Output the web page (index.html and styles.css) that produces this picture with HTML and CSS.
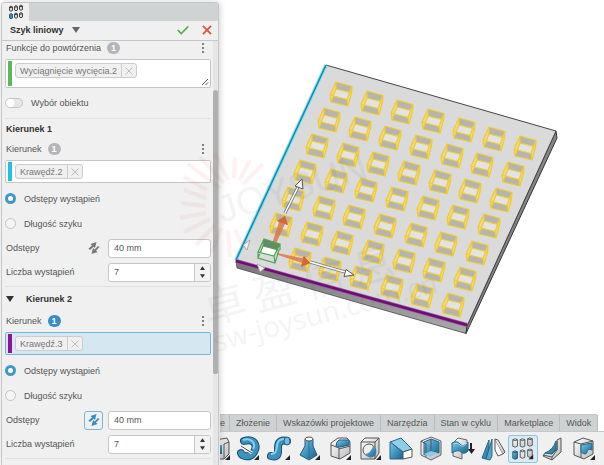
FILE: index.html
```html
<!DOCTYPE html>
<html lang="pl">
<head>
<meta charset="utf-8">
<title>Szyk liniowy</title>
<link rel="stylesheet" href="styles.css">
</head>
<body>
<svg width="0" height="0" class="defs" aria-hidden="true">
  <defs>
    <linearGradient id="blue" x1="0" y1="0" x2="1" y2="1"><stop offset="0" stop-color="#8cc9e6"/><stop offset=".5" stop-color="#4295bd"/><stop offset="1" stop-color="#1d6188"/></linearGradient>
    <linearGradient id="grey" x1="0" y1="0" x2="1" y2="1"><stop offset="0" stop-color="#fff"/><stop offset="1" stop-color="#b9bcbd"/></linearGradient>
    <linearGradient id="side" x1="0" y1="0" x2="0" y2="1"><stop offset="0" stop-color="#777"/><stop offset="1" stop-color="#aaa"/></linearGradient>
    <symbol id="swap" viewBox="0 0 14 14"><path d="M1.500 7.500 5 4.500 3.500 3 9.500 1 8 7 6.500 5.800 3 9zM12.500 6 9 9.500 10.500 11 4.500 13 6 7 7.500 8.500 11 5z" fill="currentColor"/></symbol>
    <symbol id="cross" viewBox="0 0 10 10"><path d="M1.500 1.500 8.500 8.500M8.500 1.500 1.500 8.500" stroke="currentColor" fill="none"/></symbol>
    <symbol id="down" viewBox="0 0 8 6"><path d="M0 0H8L4 6z" fill="currentColor"/></symbol>
    <symbol id="dots" viewBox="0 0 4 12"><g fill="#666"><circle cx="2" cy="2" r="1.100"/><circle cx="2" cy="6" r="1.100"/><circle cx="2" cy="10" r="1.100"/></g></symbol>
    <symbol id="corner" viewBox="0 0 28 28"><path d="M25 20V25H20z" fill="#222"/></symbol>
  </defs>
</svg>

<div class="app">
  <form class="panel">
    <div class="strip">
      <button type="button" class="strip-tab" aria-label="Szyk liniowy">
        <svg viewBox="0 0 16 16"><g fill="#d8d8d8" stroke="#444"><path d="M1.500 3V6.500Q3 8 4.500 6.500V3Q3 1 1.500 3Q3 4.500 4.500 3"/><path d="M6.500 2.500V6Q8 7.500 9.500 6V2.500Q8 .5 6.500 2.500Q8 4 9.500 2.500"/><path d="M11.500 2V5.500Q13 7 14.500 5.500V2Q13 0 11.500 2Q13 3.500 14.500 2"/><path d="M1.500 10.500V14Q3 15.500 4.500 14V10.500Q3 8.500 1.500 10.500" fill="#3790b8" stroke="#1f6286"/><path d="M6.500 10V13.500Q8 15 9.500 13.500V10Q8 8 6.500 10Q8 11.500 9.500 10"/><path d="M11.500 9.500V13Q13 14.500 14.500 13V9.500Q13 7.500 11.500 9.500Q13 11 14.500 9.500"/></g></svg>
      </button>
    </div>
    <header class="head">
      <button type="button" class="title">Szyk liniowy <svg class="tri"><use href="#down"/></svg></button>
      <button type="button" class="act" aria-label="OK"><svg viewBox="0 0 12 12"><path d="M1.500 6 4.500 9 10.500 3" fill="none" stroke="#56ae48" stroke-width="1.500"/></svg></button>
      <button type="button" class="act" aria-label="Anuluj"><svg viewBox="0 0 12 12"><path d="M2.500 2.500 9.500 9.500M9.500 2.500 2.500 9.500" fill="none" stroke="#e0503c" stroke-width="1.500"/></svg></button>
    </header>
    <div class="scroll">
      <div class="content">
        <section class="group">
          <div class="label first"><span>Funkcje do powtórzenia</span><b class="badge">1</b><button type="button" class="more" aria-label="Więcej"><svg><use href="#dots"/></svg></button></div>
          <div class="pick tall">
            <i class="bar green"></i>
            <span class="chip"><span>Wyciągnięcie wycięcia.2</span><button type="button" aria-label="Usuń"><svg><use href="#cross"/></svg></button></span>
            <svg class="grip" viewBox="0 0 8 8"><path d="M1 7 7 1M4.500 7 7 4.500" stroke="#555" fill="none"/></svg>
          </div>
          <label class="toggle"><input type="checkbox"><span>Wybór obiektu</span></label>
        </section>

        <section class="group">
          <h2>Kierunek 1</h2>
          <div class="label"><span>Kierunek</span><b class="badge">1</b><button type="button" class="more" aria-label="Więcej"><svg><use href="#dots"/></svg></button></div>
          <div class="pick"><i class="bar cyan"></i><span class="chip"><span>Krawędź.2</span><button type="button" aria-label="Usuń"><svg><use href="#cross"/></svg></button></span></div>
          <div class="fields">
            <label class="radio"><input type="radio" name="mode1" checked><span>Odstępy wystąpień</span></label>
            <label class="radio"><input type="radio" name="mode1"><span>Długość szyku</span></label>
            <div class="field"><label for="gap1">Odstępy</label><button type="button" class="swap" aria-label="Odwróć"><svg><use href="#swap"/></svg></button><input id="gap1" type="text" value="40 mm"></div>
            <div class="field"><label for="num1">Liczba wystąpień</label><span class="spin"><input id="num1" type="text" value="7"><span class="steps"><button type="button" class="up" aria-label="Więcej"><svg><use href="#down"/></svg></button><button type="button" aria-label="Mniej"><svg><use href="#down"/></svg></button></span></span></div>
          </div>
        </section>

        <section class="group">
          <h2 class="fold"><button type="button"><svg class="tri"><use href="#down"/></svg>Kierunek 2</button></h2>
          <div class="label"><span>Kierunek</span><b class="badge on">1</b><button type="button" class="more" aria-label="Więcej"><svg><use href="#dots"/></svg></button></div>
          <div class="pick active"><i class="bar purple"></i><span class="chip"><span>Krawędź.3</span><button type="button" aria-label="Usuń"><svg><use href="#cross"/></svg></button></span></div>
          <div class="fields">
            <label class="radio"><input type="radio" name="mode2" checked><span>Odstępy wystąpień</span></label>
            <label class="radio"><input type="radio" name="mode2"><span>Długość szyku</span></label>
            <div class="field"><label for="gap2">Odstępy</label><button type="button" class="swap on" aria-label="Odwróć"><svg><use href="#swap"/></svg></button><input id="gap2" type="text" value="40 mm"></div>
            <div class="field"><label for="num2">Liczba wystąpień</label><span class="spin"><input id="num2" type="text" value="7"><span class="steps"><button type="button" class="up" aria-label="Więcej"><svg><use href="#down"/></svg></button><button type="button" aria-label="Mniej"><svg><use href="#down"/></svg></button></span></span></div>
          </div>
        </section>
      </div>
      <div class="track"><div class="thumb"></div></div>
    </div>
  </form>

  <main class="work">
    <svg class="scene" viewBox="220 0 384 414" preserveAspectRatio="xMinYMin meet" role="img" aria-label="Model płyty z szykiem otworów">
      <defs>
        <g id="hole">
          <path d="M-5-12 11-7.500 8-2-5-5z" fill="#b5b5ae"/>
          <path d="M-8 2 6 5.500 7 12-10 8z" fill="#b5b5ae"/>
          <path d="M-5-5 8-2 5.500 5-8 2z" fill="#e3e3e3"/>
          <path d="M-5-12-11 1-10 8-5-5zM11-7.500 6 5.500 7 12 10.500-1z" fill="#ecd98a"/>
          <path d="M-5-12 11-7.500 6 5.500-11 1zM-5-5 10.500-1 7 12-10 8zM-5-12V-5M11-7.500 10.500-1M6 5.500 7 12M-11 1-10 8" fill="none" stroke="#f3cb2c" stroke-width="1.200" stroke-linejoin="round"/>
        </g>
        <g id="row6"><use href="#hole" x="31" y="9"/><use href="#hole" x="61" y="18"/><use href="#hole" x="92" y="27"/><use href="#hole" x="123" y="36"/><use href="#hole" x="153" y="45"/><use href="#hole" x="184" y="54"/></g>
        <g id="row7"><use href="#hole"/><use href="#row6"/></g>
      </defs>
      <path d="M236 260 467 326 466 333.500 237 268z" fill="url(#side)" stroke="#444" stroke-width=".8"/>
      <path d="M467 326 556 131 557 138 466 333.500z" fill="#858585" stroke="#333"/>
      <path d="M326 65 556 131 467 326 236 260z" fill="#dadada"/>
      <path d="M326 65 556 131 467 326" fill="none" stroke="#444"/>
      <use href="#row7" x="341" y="94"/><use href="#row7" x="329" y="120"/><use href="#row7" x="317" y="146"/><use href="#row7" x="305" y="172"/><use href="#row7" x="293" y="199"/><use href="#row7" x="281" y="225"/><use href="#row6" x="269" y="251"/>
      <path d="M326 65 236 260" stroke="#7fe0f3" stroke-width="3.500"/><path d="M326 65 236 260" stroke="#1489a8" stroke-width="1.500"/>
      <path d="M236 261 467 325" stroke="#a657aa" stroke-width="4"/><path d="M236 261 467 325" stroke="#681070" stroke-width="2.500"/>
      <path d="M285 213 298 187M310 262 345 272" stroke="#777" stroke-width="3"/><path d="M285 213 298 187M310 262 345 272" stroke="#fff" stroke-width="1.500"/>
      <path d="M302 179 295 186 303 189zM354 275 346 269.500 344 276.500z" fill="#fff" stroke="#555"/>
      <path d="M271 247 279 222 277 221 285 216 288 225 285 224 274 248z" fill="#d97849" opacity=".85"/><path d="M277 221 285 216 288 225 282 223z" fill="#d56838"/>
      <path d="M277 253 302 258 304 256 310 263 301 267 302 263 278 255z" fill="#d97849" opacity=".85"/><path d="M304 256 310 263 301 267z" fill="#d56838"/>
      <path d="M259 249 249 246M266 258 262 266" stroke="#ddd" stroke-width="4"/><path d="M243 245 250 240 247 250zM260 272 257 264 265 268z" fill="#f2f2f2" stroke="#999" stroke-width=".8"/>
      <path d="M264 239 280 244 277 250 263 246z" fill="#668966"/><path d="M263 246 276 250 274 256 261 253z" fill="#fff"/>
      <path d="M264 239 280 244 274 256 258 252zM263 246 279 250 275 263 258 258zM264 239 263 246M280 244V250M274 256 275 263M258 252V258" fill="none" stroke="#48a852" stroke-width="1.200"/>
    </svg>
    <nav class="tabs">
      <a href="#" class="cut">e</a><a href="#">Złożenie</a><a href="#">Wskazówki projektowe</a><a href="#">Narzędzia</a><a href="#">Stan w cyklu</a><a href="#">Marketplace</a><a href="#">Widok</a>
    </nav>
    <div class="tools">
      <button type="button" class="half" aria-label="Kieszeń"><svg viewBox="15 0 13 28"><path d="M10 5 22 3 24 7V19L19 24H10z" fill="url(#grey)" stroke="#555"/><path d="M19 9V24M19 9 24 7" stroke="#555"/><path d="M12 10H17V19H12z" fill="url(#blue)"/><use href="#corner" width="28" height="28"/></svg></button>
      <button type="button" aria-label="Obrót"><svg viewBox="0 0 28 28"><path d="M10 6C20 3 24 10 20 17S8 21 7 18" fill="none" stroke="#174f70" stroke-width="8" stroke-linecap="round"/><path d="M10 6C20 3 24 10 20 17S8 21 7 18" fill="none" stroke="#3a93bd" stroke-width="6" stroke-linecap="round"/><path d="M9 5C18 2 22 9 19 14" fill="none" stroke="#8dccea" stroke-width="2"/><path d="M7 11 18 18" stroke="#fff" stroke-width="3"/><path d="M7 11 18 18" stroke="#444"/><use href="#corner" width="28" height="28"/></svg></button>
      <button type="button" aria-label="Wyciągnięcie po ścieżce"><svg viewBox="0 0 28 28"><path d="M6 21C17 24 11 12 14 8S20 6 22 6" fill="none" stroke="#174f70" stroke-width="8" stroke-linecap="round"/><path d="M6 21C17 24 11 12 14 8S20 6 22 6" fill="none" stroke="#3a93bd" stroke-width="6" stroke-linecap="round"/><path d="M6 19C13 20 11 11 13 7S19 4 21 4" fill="none" stroke="#8dccea" stroke-width="2"/><ellipse cx="22" cy="6" rx="3" ry="4" fill="#77bce0" stroke="#205d80"/><use href="#corner" width="28" height="28"/></svg></button>
      <button type="button" aria-label="Wyciągnięcie złożone"><svg viewBox="0 0 28 28"><path d="M10 4V11L5 20 14 25 22 20 18 11V4z" fill="url(#blue)" stroke="#205d80"/><path d="M14 5V25" stroke="#277198"/><ellipse cx="14" cy="4" rx="4" ry="2" fill="#fff" stroke="#555"/><use href="#corner" width="28" height="28"/></svg></button>
      <button type="button" aria-label="Zaokrąglenie"><svg viewBox="0 0 28 28"><path d="M5 8 12 3H21L24 7V18L14 24 5 21z" fill="url(#grey)" stroke="#555"/><path d="M5 10 13 13V24M13 14 24 11" fill="none" stroke="#555"/><path d="M13 5 23 5V10L14 12Q11 12 10 11 10 7 13 5z" fill="url(#blue)" stroke="#1d6188"/><use href="#corner" width="28" height="28"/></svg></button>
      <button type="button" aria-label="Otwór"><svg viewBox="0 0 28 28"><path d="M5 7 9 3H23V18L19 24H5z" fill="url(#grey)" stroke="#555"/><path d="M5 7H19V24M19 7 23 3" fill="none" stroke="#555"/><circle cx="13" cy="15" r="6" fill="#eee" stroke="#555"/><path d="M17 11A6 6 0 1 1 9 19Q15 18 17 11z" fill="url(#blue)"/><use href="#corner" width="28" height="28"/></svg></button>
      <button type="button" aria-label="Pochylenie"><svg viewBox="0 0 28 28"><path d="M3 7 14 3 25 14 16 17z" fill="#91cce8" stroke="#246889"/><path d="M3 7 16 17V24H3z" fill="url(#blue)" stroke="#246889"/><path d="M16 17 25 14V22L16 24z" fill="#fff" stroke="#555"/></svg></button>
      <button type="button" aria-label="Skorupa"><svg viewBox="0 0 28 28"><path d="M4 6 14 2 24 6V20L14 25 4 20z" fill="url(#grey)" stroke="#666"/><path d="M7 7 14 4 22 7V18L14 16 7 20z" fill="url(#blue)" stroke="#246889"/><path d="M14 4V16M4 6 9 9V22" fill="none" stroke="#555"/><path d="M7 19 14 16 21 18 13 22z" fill="#8cc9e6"/></svg></button>
      <button type="button" aria-label="Przesuń ścianę"><svg viewBox="0 0 28 28"><path d="M5 8V21L14 24V14L19 12V5L10 3z" fill="url(#grey)" stroke="#666"/><path d="M4 8Q9 5 12 9T20 7V16Q16 20 13 17T4 18z" fill="url(#blue)" stroke="#246889"/><path d="M6 9Q9 7 12 10T19 8" fill="none" stroke="#a3d7ef"/><path d="M23 8V15" stroke="#222" stroke-width="2"/><path d="M20 14H27L23.500 19z" fill="#222"/></svg></button>
      <button type="button" aria-label="Lustro"><svg viewBox="0 0 28 28"><path d="M4 23 11 5V18L8 24z" fill="url(#blue)" stroke="#246889"/><path d="M8 24 14 4V21L12 25z" fill="#58a5ca" stroke="#246889"/><path d="M17 4 25 19 20 21 17 15z" fill="#fff" stroke="#555"/><path d="M17 4 20 5 27 17 25 19" fill="url(#grey)" stroke="#555"/></svg></button>
      <button type="button" class="sel" aria-label="Szyk liniowy"><svg viewBox="0 0 28 28"><g fill="url(#grey)" stroke="#555"><path d="M3 4V11Q5.500 13 8 11V4Q5.500 2 3 4Q5.500 6 8 4M11 4V11Q13.500 13 16 11V4Q13.500 2 11 4Q13.500 6 16 4M19 3V10Q21.500 12 24 10V3Q21.500 1 19 3Q21.500 5 24 3"/><path d="M3 17V24Q5.500 26 8 24V17Q5.500 15 3 17Q5.500 19 8 17" fill="url(#blue)" stroke="#205d80"/><path d="M11 16V23Q13.500 25 16 23V16Q13.500 14 11 16Q13.500 18 16 16M19 15V22Q21.500 24 24 22V15Q21.500 13 19 15Q21.500 17 24 15"/></g><use href="#corner" width="28" height="28"/></svg></button>
      <button type="button" aria-label="Żebro"><svg viewBox="0 0 28 28"><path d="M18 5 22 3V17L13 25 4 21 6 18 18 15z" fill="url(#grey)" stroke="#555"/><path d="M18 6V15L13 22M13 25V22L4 20" fill="none" stroke="#555"/><path d="M17 6V15L13 19 6 18Q14 15 17 6z" fill="url(#blue)" stroke="#246889"/></svg></button>
      <button type="button" aria-label="Podział"><svg viewBox="0 0 28 28"><path d="M4 7 13 3 23 6V19L14 24 4 20z" fill="url(#grey)" stroke="#555"/><path d="M4 7 11 9 23 6M11 9V23" fill="none" stroke="#555"/><path d="M11 10 22 8V15Q18 13 17 17T11 17z" fill="url(#blue)" stroke="#246889"/><use href="#corner" width="28" height="28"/></svg></button>
    </div>
  </main>

  <svg class="mark" viewBox="0 0 604 465" aria-hidden="true">
    <g stroke="#d33" stroke-width="4" opacity=".06"><path d="M220 188 188 164M224 183 200 157M228 180 215 153M234 178 235 157M239 181 250 160M243 184 263 164M207 190 184 177M206 198 184 190M205 206 181 203M206 213 180 218M210 219 184 232M215 225 196 245M221 228 212 252M228 230 230 257M235 229 244 249"/></g>
    <g fill="#555" opacity=".06">
      <text class="mark-name" transform="translate(222 223) rotate(-17)">JOYSUN</text>
      <text class="mark-cjk" transform="translate(208 325) rotate(-15)">卓 盈 信 息</text>
      <text class="mark-url" transform="translate(216 352) rotate(-15)">sw-joysun.com.cn</text>
    </g>
  </svg>
</div>
</body>
</html>
```
FILE: styles.css
```css
* { box-sizing: border-box; }
html, body { height: 100%; }
body { margin: 0; background: #fff; color: #555; font: 9px/12px "Liberation Sans", Arial, sans-serif; overflow: hidden; }
button { margin: 0; padding: 0; border: 0; background: none; color: inherit; font: inherit; display: flex; align-items: center; justify-content: center; }
svg { display: block; }
.defs { position: absolute; }
.app { position: relative; height: 100%; display: grid; grid-template-columns: 220px minmax(0, 1fr); }

.panel { position: relative; z-index: 1; display: flex; flex-direction: column; min-height: 0; margin: 2px 1px 0; background: #f0f0f0; border: 1px solid #c4c6c8; border-bottom: 0; border-radius: 4px 4px 0 0; box-shadow: 1px 0 6px rgba(0, 0, 0, .18); }
.strip { flex: none; height: 18px; background: #cfd3d3; border-radius: 3px 3px 0 0; }
.strip-tab { width: 27px; height: 18px; background: #f0f0f0; border-radius: 3px 0 0 0; }
.strip-tab svg { width: 16px; height: 16px; }
.head { flex: none; display: flex; align-items: center; gap: 10px; height: 20px; padding: 0 4px 2px 8px; border-bottom: 1px solid #c4c6c8; }
.title { margin-right: auto; gap: 8px; font-weight: bold; color: #333; }
.tri { width: 8px; height: 6px; color: #333; }
.title .tri { color: #666; }
.act svg { width: 14px; height: 14px; }

.scroll { flex: 1; min-height: 0; display: grid; grid-template-columns: minmax(0, 1fr) 5px; overflow: hidden; }
.content { padding: 0 2px 0 3px; }
.track { background: #e6e6e6; }
.thumb { height: 67%; margin-top: 49px; background: #b0b0b0; border-radius: 3px 3px 2px 2px; }
.group { border-bottom: 1px solid #e0e0e0; }
.label { display: flex; align-items: center; height: 21px; gap: 6px; padding: 0 0 2px 1px; }
.label.first { height: 13px; margin-bottom: 5px; padding-bottom: 0; }
.badge { width: 13px; border-radius: 6px; background: #b3b5b8; color: #fff; line-height: 12px; text-align: center; }
.badge.on { background: #368ec4; }
.more { margin-left: auto; width: 16px; }
.more svg { width: 4px; height: 12px; }
h2 { display: flex; align-items: center; height: 20px; margin: 0; padding-left: 1px; font-size: 9px; color: #333; }
.fold { height: 24px; }
.fold button { gap: 12px; }

.pick { display: flex; align-items: flex-start; gap: 3px; height: 23px; padding: 1px; background: #fff; border: 1px solid #c4c6c8; border-radius: 2px; }
.tall { height: 29px; }
.pick.active { background: #d5e8f2; border-color: #77b7dd; }
.bar { align-self: stretch; width: 4px; margin-left: 1px; }
.green { background: #5cb85c; }
.cyan { background: #1fc1e4; }
.purple { background: #8f1493; }
.chip { display: flex; height: 15px; margin-top: 2px; background: #f0f0f0; border: 1px solid #ccc; border-radius: 3px; color: #777; }
.chip span { padding: 0 4px; line-height: 14px; }
.chip button { width: 15px; border-left: 1px solid #ccc; color: #bbb; }
.chip svg { width: 10px; height: 10px; }
.grip { align-self: flex-end; width: 8px; height: 8px; margin-left: auto; }

.toggle { display: flex; align-items: center; gap: 8px; height: 30px; }
.toggle input { appearance: none; width: 18px; height: 10px; margin: 0; border: 1px solid #c6c6c6; border-radius: 5px; background: radial-gradient(circle at 4px 4px, #fff 4px, #e6e6e6 5px); }
.fields { padding: 3px 0 2px; }
.radio { display: flex; align-items: center; gap: 8px; height: 25px; }
.radio input { appearance: none; width: 11px; height: 11px; margin: 0; border: 1px solid #c2c2c2; border-radius: 50%; background: #f5f5f5; }
.radio input:checked { border: 3px solid #3f98cc; background: #fff; }
.field { display: flex; align-items: center; height: 24px; padding-left: 1px; }
.field label { margin-right: auto; }
.field input { height: 19px; width: 103px; padding: 0 5px; border: 1px solid #c4c6c8; border-radius: 3px; background: #fff; color: #555; font: inherit; }
.swap { width: 19px; height: 19px; margin-right: 5px; border: 1px solid transparent; border-radius: 3px; color: #777; }
.swap svg { width: 14px; height: 14px; }
.swap.on { border-color: #77b7dd; color: #368ec4; }
.spin { display: flex; width: 103px; height: 19px; border: 1px solid #c4c6c8; border-radius: 3px; background: #fff; overflow: hidden; }
.field .spin input { flex: 1; min-width: 0; width: auto; height: 17px; border: 0; padding: 0 5px; }
.steps { display: grid; grid-template-rows: 1fr 1fr; width: 16px; background: #f3f3f3; border-left: 1px solid #c4c6c8; color: #333; }
.steps svg { width: 5px; height: 4px; }
.up svg { transform: rotate(180deg); }

.work { display: flex; flex-direction: column; min-width: 0; min-height: 0; }
.scene { flex: 1; min-height: 0; width: 100%; }
.tabs { flex: none; display: flex; align-self: flex-start; height: 17px; background: #cfd2d2; border-top: 1px solid #c2c5c5; border-radius: 0 3px 0 0; }
.tabs a { padding: 0 6px; line-height: 16px; color: #555; text-decoration: none; white-space: nowrap; border-right: 1px solid #b9bcbc; }
.tabs .cut { padding: 0 4px 0 0; }
.tools { flex: none; display: grid; grid-template-columns: 13px repeat(12, minmax(0, 1fr)); height: 34px; padding: 1px 5px 0 0; background: #f0f0f0; border-top: 1px solid #c8c8c8; }
.tools button { overflow: hidden; }
.tools svg { width: 28px; height: 28px; }
.tools .half { justify-content: flex-start; }
.tools .half svg { width: 13px; }
.tools .sel { align-self: center; height: 28px; background: #dceaf2; border-radius: 3px; box-shadow: inset 0 0 0 1px #8ec3e2; }
.tools .sel svg { width: 26px; height: 26px; }

.mark { position: absolute; z-index: 2; inset: 0; width: 100%; height: 100%; pointer-events: none; }
.mark-name { font: 38px "Liberation Sans", sans-serif; }
.mark-cjk { font: 42px "Noto Sans CJK SC", sans-serif; }
.mark-url { font: 28px "Open Sans", sans-serif; }
```
